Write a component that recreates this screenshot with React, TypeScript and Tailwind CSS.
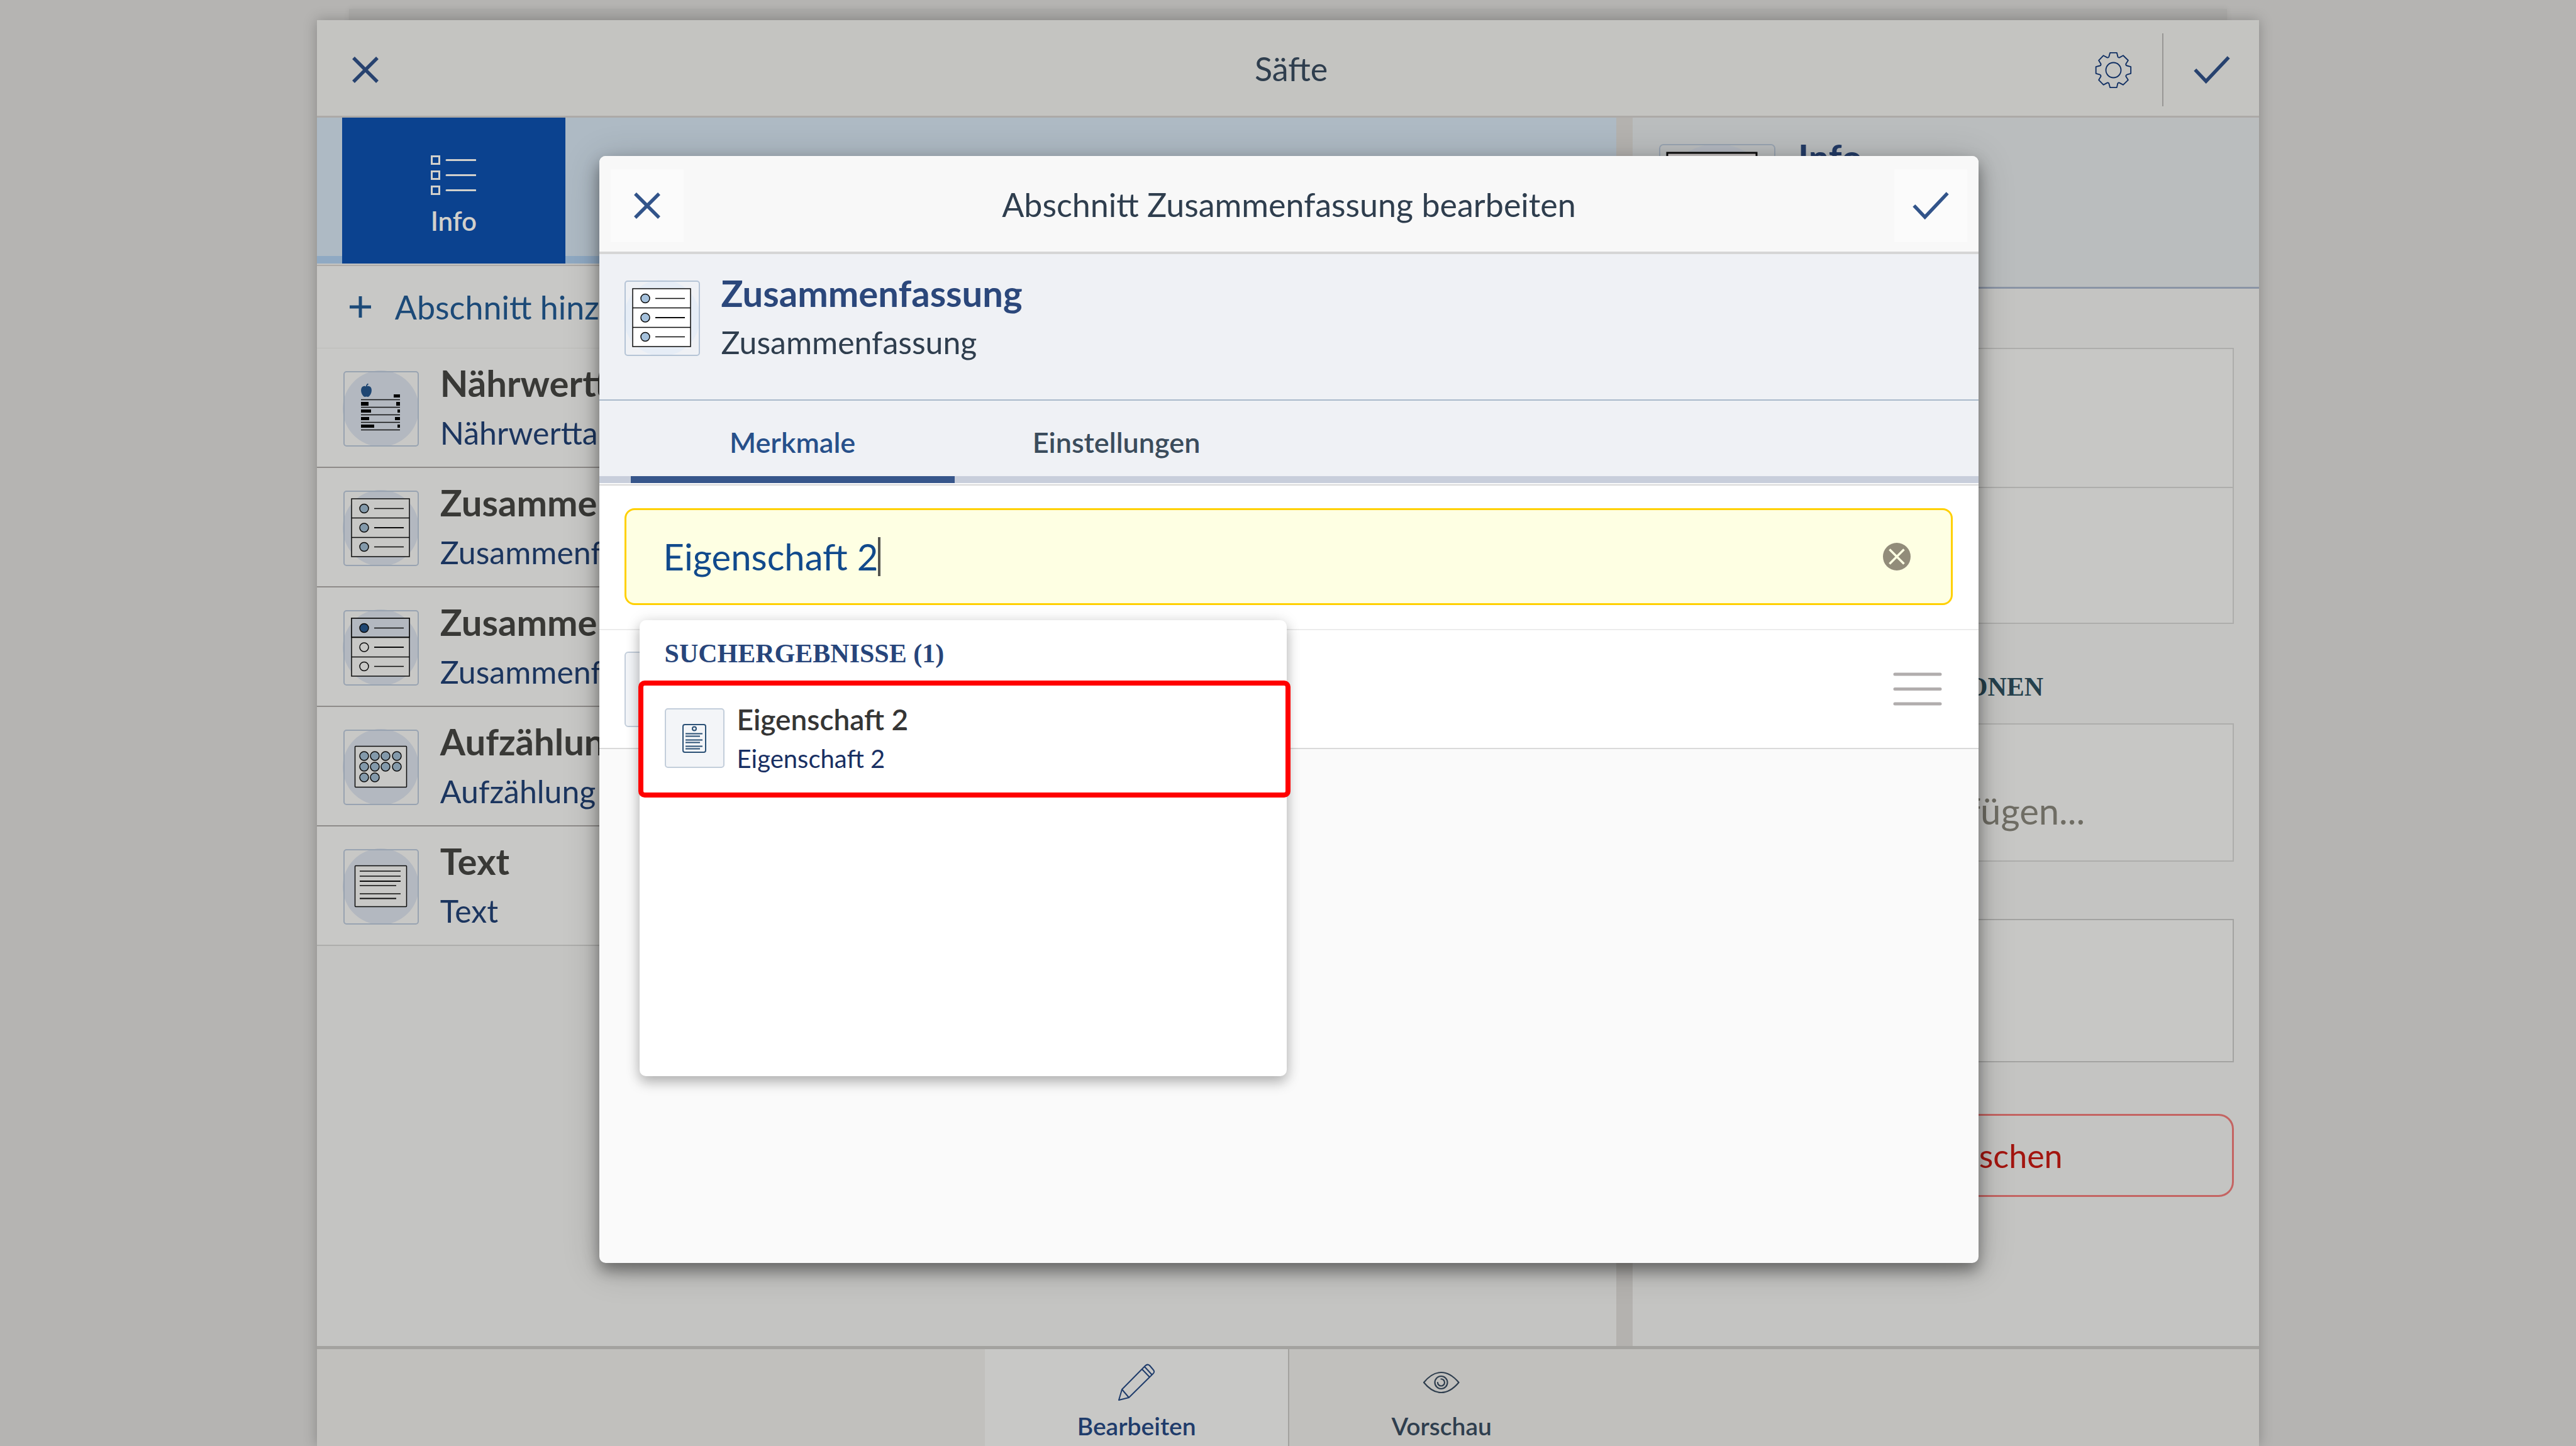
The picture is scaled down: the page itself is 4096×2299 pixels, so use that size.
import React from "react";

type IconKind = "nutrition" | "summary" | "summaryFirst" | "grid" | "text";

const ROWS = [0, 1, 2];
const DOTS = [
  [33, 42], [50, 42], [67, 42], [85, 42],
  [33, 59], [50, 59], [67, 59], [85, 59],
  [33, 76], [50, 76],
];

function SummaryDrawing({ paper, dot, firstOnly }: { paper: string; dot: string; firstOnly?: boolean }) {
  return (
    <g stroke="#0b0b0b" strokeWidth="1.5">
      <rect x="13" y="13" width="92" height="92" fill={paper} />
      {firstOnly && <rect x="13" y="13" width="92" height="30" fill="#b3b8c0" />}
      <path d="M13 43.5H105M13 74.5H105" />
      {ROWS.map((i) => (
        <g key={i}>
          <circle cx="33" cy={28.5 + i * 30.5} r="7" fill={firstOnly ? (i === 0 ? "#1f4672" : paper) : dot} />
          <path d={`M49 ${28.5 + i * 30.5}H96`} strokeWidth={i === 1 ? 2.2 : 1.5} />
        </g>
      ))}
    </g>
  );
}

function NutritionDrawing() {
  const bars = [
    [80, 37, 10, 5],
    [28, 49, 12, 6], [84, 49, 6, 6],
    [28, 61, 16, 5], [86, 61, 4, 5],
    [28, 73, 13, 5], [82, 73, 8, 5],
    [28, 85, 21, 5], [86, 85, 4, 5],
  ];
  return (
    <g>
      <path
        d="M36.500 25c-2-2-6-1.500-7.500 1.500-2 4-.5 10 3 13.500 1.500 1.500 3 1 4.500.5 1.500.5 3 1 4.500-.5 3.500-3.500 5-9.500 3-13.500-1.500-3-5.500-3.500-7.500-1.500z"
        fill="#1f4672"
      />
      <path d="M37 25c-.5-2 1-4 2.500-4.500" stroke="#1f4672" strokeWidth="2" fill="none" />
      {bars.map(([x, y, w, h]) => (
        <rect key={`${x}-${y}`} x={x} y={y} width={w} height={h} fill="#000" />
      ))}
      <path d="M28 45.500H90M28 57.500H90M28 69.500H90M28 81.500H90M28 93.500H90" stroke="#111" strokeWidth="1.500" />
    </g>
  );
}

function SectionIcon({ kind, light }: { kind: IconKind; light?: boolean }) {
  const paper = light ? "#ffffff" : "#c8c8c6";
  const dot = light ? "#a5c1dc" : "#8399aa";
  return (
    <svg viewBox="0 0 120 120" className="size-[120px] shrink-0 overflow-visible" fill="none" aria-hidden="true">
      <circle cx="59.5" cy="59.5" r="60.500" fill={light ? "#e6edf6" : "#b3b8c0"} />
      <rect x="1" y="1" width="118" height="118" rx="4" stroke={light ? "#b5c4d6" : "#98a3b1"} strokeWidth="2" />
      {kind === "summary" && <SummaryDrawing paper={paper} dot={dot} />}
      {kind === "summaryFirst" && <SummaryDrawing paper={paper} dot={dot} firstOnly />}
      {kind === "nutrition" && <NutritionDrawing />}
      {kind === "grid" && (
        <g stroke="#0b0b0b" strokeWidth="1.500">
          <rect x="18.500" y="26.500" width="82" height="65" rx="1" fill={paper} />
          {DOTS.map(([x, y]) => (
            <circle key={`${x}-${y}`} cx={x} cy={y} r="7" fill={dot} />
          ))}
        </g>
      )}
      {kind === "text" && (
        <g stroke="#0b0b0b" strokeWidth="1.500">
          <rect x="18.500" y="26.500" width="82" height="65" rx="1" fill={paper} />
          <path d="M26 35H91M26 43H91M26 58H84M26 71H91" />
          <path d="M26 51H91M26 78.500H84" strokeWidth="2.200" />
        </g>
      )}
    </svg>
  );
}

function CrossIcon() {
  return (
    <svg viewBox="0 0 42 42" className="size-[42px]" fill="none" stroke="currentColor" strokeWidth="5.500" aria-hidden="true">
      <path d="M2 2L40 40M40 2L2 40" />
    </svg>
  );
}

function CheckIcon() {
  return (
    <svg viewBox="950 120 315 240" className="h-11 w-[58px]" fill="none" stroke="currentColor" strokeWidth="30" aria-hidden="true">
      <path d="M962 239L1057 339L1253 132" />
    </svg>
  );
}

function GearIcon() {
  return (
    <svg viewBox="111 81 320 320" className="size-[59px]" fill="none" stroke="currentColor" strokeWidth="10" strokeLinejoin="round" aria-hidden="true">
      <path d="M242 91H300L309 126Q312 135 322 133L355 115L398 157L378 188Q377 200 388 203L421 212V270L388 280Q377 284 378 294L398 326L355 368L322 350Q312 347 308 356L300 391H242L232 356Q229 347 218 350L185 368L144 326L163 294Q164 284 154 280L120 270V212L154 203Q164 200 163 188L144 157L184 115L218 133Q229 135 232 126Z" />
      <circle cx="271" cy="241" r="65" />
    </svg>
  );
}

const SECTIONS: { title: string; subtitle: string; icon: IconKind }[] = [
  { title: "Nährwerttabelle", subtitle: "Nährwerttabelle", icon: "nutrition" },
  { title: "Zusammenfassung", subtitle: "Zusammenfassung", icon: "summary" },
  { title: "Zusammenfassung", subtitle: "Zusammenfassung", icon: "summaryFirst" },
  { title: "Aufzählung", subtitle: "Aufzählung", icon: "grid" },
  { title: "Text", subtitle: "Text", icon: "text" },
];

function LeftColumn() {
  return (
    <div className="flex w-[66.9%] flex-col">
      <div className="relative flex h-[232px] bg-[#aebac4] pl-10">
        <div className="absolute inset-x-0 bottom-0 h-3 bg-[#8fa9c3]" />
        <button className="relative flex w-[355px] flex-col items-center bg-[#0b428f] pt-[60px] text-[#d2d0cb]">
          <svg viewBox="0 0 72 63" className="h-[63px] w-[72px]" fill="none" stroke="currentColor" strokeWidth="3" aria-hidden="true">
            <path d="M1.500 1.500h12v12h-12zM1.500 25.500h12v12h-12zM1.500 49.500h12v12h-12z" />
            <path d="M25 7.500H71M25 31.500H71M25 55.500H71" strokeLinecap="round" />
          </svg>
          <span className="mt-4 text-[42px] leading-[50px] font-semibold">Info</span>
        </button>
      </div>
      <div className="mt-0.5 flex flex-col border-t-2 border-[#adaaa7] bg-[#c8c8c6]">
        <button className="flex h-[131px] items-center gap-[38px] border-b border-[#bdbdba] pl-[52px] text-[52px] text-[#1c4a78]">
          <svg viewBox="0 0 34 34" className="size-[34px]" stroke="currentColor" strokeWidth="5" aria-hidden="true">
            <path d="M17 0V34M0 17H34" />
          </svg>
          Abschnitt hinzufügen
        </button>
        <ul>
          {SECTIONS.map((s, i) => (
            <li key={i} className="flex h-[190px] gap-[34px] border-b-2 border-[#8e8b89] pl-[42px] last:border-[#adadab]">
              <div className="pt-9">
                <SectionIcon kind={s.icon} />
              </div>
              <div className="pt-4 whitespace-nowrap">
                <div className="text-[58px] leading-[78px] font-bold text-[#393936]">{s.title}</div>
                <div className="text-[50px] leading-[80px] text-[#1b355f]">{s.subtitle}</div>
              </div>
            </li>
          ))}
        </ul>
      </div>
    </div>
  );
}

function RightColumn() {
  return (
    <div className="flex min-w-0 flex-1 flex-col">
      <div className="flex h-[272px] gap-9 border-b-[3px] border-[#8a94a5] bg-[#babdbe] pt-[42px] pl-[42px]">
        <svg viewBox="0 0 185 185" className="size-[185px] overflow-visible" fill="none" aria-hidden="true">
          <circle cx="92" cy="92" r="92" fill="#b3b8c0" />
          <rect x="1" y="1" width="183" height="183" rx="6" stroke="#98a3b1" strokeWidth="2" />
          <rect x="13" y="14" width="142" height="142" fill="#c9c4c4" stroke="#0b0b0b" strokeWidth="3" />
        </svg>
        <div className="text-[58px] leading-[42px] font-bold text-[#233b66]">Info</div>
      </div>
      <div className="flex flex-col pt-[94px] pr-10 pl-[42px]">
        <div className="h-[221px] border-2 border-b-0 border-[#adadab] bg-[#c7c7c5]" />
        <div className="h-[218px] border-2 border-[#adadab] bg-[#c7c7c5]" />
        <h2 className="mt-[70px] pr-[303px] text-right font-['Liberation_Serif',serif] text-[42px] leading-[60px] font-bold whitespace-nowrap text-[#25404c]">
          INFORMATIONEN
        </h2>
        <input
          aria-label="Information hinzufügen"
          placeholder="Information hinzufügen..."
          className="mt-7 h-[220px] w-full border-2 border-[#adadab] bg-[#c7c7c5] pt-[60px] pr-[235px] pb-1 text-right text-[58px] placeholder:text-[#6f6d64]"
        />
        <div className="mt-[91px] h-[228px] border-2 border-[#a3a3a1] bg-[#c7c7c5]" />
        <button className="mt-[82px] h-[132px] rounded-3xl border-[3px] border-[#c46462] text-[52px] text-[#a3150f]">
          Produkt löschen
        </button>
      </div>
    </div>
  );
}

function BottomBar() {
  return (
    <nav className="flex h-[159px] border-t-[5px] border-[#a3a29f] bg-[#c1c0bd] pl-[34.4%] text-[39px] leading-[46px] font-semibold">
      <button className="flex w-[484px] flex-col items-center border-r-2 border-[#a3a29f] bg-[#c8c8c6] pt-[22px] text-[#1f3c6b]">
        <svg viewBox="26 7 60 61" className="h-[61px] w-[60px]" fill="none" stroke="currentColor" strokeWidth="2" strokeLinejoin="round" aria-hidden="true">
          <path d="M33 49L70 11.500Q73.500 8 77 11L82.500 17.500Q86 21 82 24.500L44 62ZM33 49L28 66L44 62M65 17L76.500 29M69 13L80.500 25.500" />
        </svg>
        <span className="mt-4">Bearbeiten</span>
      </button>
      <button className="flex w-[484px] flex-col items-center pt-[22px] text-[#2f3e4e]">
        <svg viewBox="511 7 60 61" className="h-[61px] w-[60px]" fill="none" stroke="currentColor" strokeWidth="2.200" strokeLinejoin="round" aria-hidden="true">
          <path d="M513 38Q526 22 540.500 22Q555 22 568.500 38Q555 54 540.500 54Q526 54 513 38Z" />
          <circle cx="540.500" cy="38" r="10" />
          <path d="M540.500 32.500A5.500 5.500 0 1 1 535 38" strokeLinecap="round" />
        </svg>
        <span className="mt-4">Vorschau</span>
      </button>
    </nav>
  );
}

function SearchResults() {
  return (
    <div className="absolute top-[178px] left-6 flex h-[725px] w-[48.7%] flex-col rounded-[10px] bg-white shadow-[0_10px_20px_rgba(0,0,0,0.25),0_0_24px_rgba(0,0,0,0.1)]">
      <h3 className="h-[96px] pt-2 pl-10 font-['Liberation_Serif',serif] text-[42px] leading-[90px] font-bold text-[#27457b]">
        SUCHERGEBNISSE (1)
      </h3>
      <button className="relative flex h-[186px] gap-[20px] pl-10 text-left">
        <span className="absolute inset-y-0 -right-1.5 -left-0.5 rounded-[10px] border-8 border-[#ff0000]" />
        <svg viewBox="0 0 95 95" className="mt-11 size-[95px]" fill="none" stroke="#2a5075" strokeWidth="2" aria-hidden="true">
          <rect x="1" y="1" width="93" height="93" rx="4" fill="#f3f5f8" stroke="#c3cedb" />
          <rect x="29" y="26" width="36" height="44" rx="3" />
          <circle cx="47" cy="32.500" r="3" />
          <path d="M33 40.500H60M33 44.500H56M33 50.500H60M33 54.500H56M33 60.500H60M33 64.500H56" />
        </svg>
        <span className="block pt-8">
          <span className="block text-[46px] leading-[60px] font-semibold text-[#353535]">Eigenschaft 2</span>
          <span className="block text-[40px] leading-[64px] text-[#182f63]">Eigenschaft 2</span>
        </span>
      </button>
    </div>
  );
}

function Dialog() {
  return (
    <div
      role="dialog"
      aria-label="Abschnitt Zusammenfassung bearbeiten"
      className="flex h-full w-[53.6%] flex-col overflow-hidden rounded-[10px] bg-[#fafafa] shadow-[0_12px_24px_rgba(0,0,0,0.4),0_8px_60px_rgba(0,0,0,0.2)]"
    >
      <header className="flex h-[156px] items-center justify-between border-b-4 border-[#d6d6d6] bg-[#f8f8f8] px-[18px] pt-1.5">
        <button aria-label="Schließen" className="grid size-[116px] place-items-center bg-[#fbfbfb] text-[#32548a]">
          <CrossIcon />
        </button>
        <h1 className="pb-1 text-[52px] text-[#2f3e4e]">Abschnitt Zusammenfassung bearbeiten</h1>
        <button aria-label="Speichern" className="grid size-[116px] place-items-center bg-[#fbfbfb] text-[#32548a]">
          <CheckIcon />
        </button>
      </header>
      <div className="flex h-[233px] gap-[34px] border-b-2 border-[#a9b9ca] bg-[#eff1f5] pl-10">
        <div className="pt-[42px]">
          <SectionIcon kind="summary" light />
        </div>
        <div className="pt-6">
          <div className="text-[58px] leading-[76px] font-bold text-[#2b477b]">Zusammenfassung</div>
          <div className="text-[50px] leading-[80px] text-[#2f3e4e]">Zusammenfassung</div>
        </div>
      </div>
      <div role="tablist" className="relative flex h-[131px] bg-[#eff1f5] pl-[50px] text-[45px] font-semibold">
        <div className="absolute inset-x-0 bottom-0 h-[11px] bg-[#c8cedb]" />
        <button role="tab" aria-selected="true" className="relative w-[515px] border-b-[11px] border-[#37568b] pt-3.5 text-[#27508a]">
          Merkmale
        </button>
        <button role="tab" aria-selected="false" className="relative w-[515px] border-b-[11px] border-transparent pt-3.5 text-[#3b4c5c]">
          Einstellungen
        </button>
      </div>
      <div className="mt-0.5 border-t-2 border-[#d9d9d9] bg-white pt-9 pr-[41px] pb-[38px] pl-10">
        <div className="relative">
          <div className="flex h-[154px] items-center rounded-[16px] border-[3px] border-[#ffd000] bg-[#feffe3] pr-[64px] pl-[59px]">
            <input
              aria-label="Merkmal suchen"
              defaultValue="Eigenschaft 2"
              className="[field-sizing:content] bg-transparent text-[58px] leading-[76px] text-[#114a8c] outline-none"
            />
            <span className="h-[62px] w-1 bg-[#555550]" />
            <button aria-label="Leeren" className="ml-auto">
              <svg viewBox="0 0 44 44" className="size-11" aria-hidden="true">
                <circle cx="22" cy="22" r="22" fill="#928c7a" />
                <path d="M10.500 10.500L33.500 33.500M33.500 10.500L10.500 33.500" stroke="#feffe3" strokeWidth="3.500" />
              </svg>
            </button>
          </div>
          <SearchResults />
        </div>
      </div>
      <div className="flex h-[191px] items-center justify-between border-y-2 border-t-[#ececec] border-b-[#dadada] bg-white pr-[58px] pl-10">
        <div className="size-[120px] rounded-md border-2 border-[#c3cedb] bg-[#f3f5f8]" />
        <svg viewBox="0 0 78 53" className="h-[53px] w-[78px]" stroke="#b1adad" strokeWidth="5" strokeLinecap="round" aria-hidden="true">
          <path d="M3 3H75M3 26.500H75M3 50H75" />
        </svg>
      </div>
    </div>
  );
}

export default function App() {
  return (
    <div className="relative flex h-screen flex-col items-center overflow-hidden bg-[#b5b4b2] pt-8 font-[Lato,sans-serif]">
      <div className="absolute top-3.5 h-10 w-[72.9%] bg-[#abaaa8] shadow-[0_0_10px_rgba(0,0,0,0.06)]" />
      <div className="relative flex w-[75.4%] flex-1 flex-col bg-[#c4c4c2] shadow-[0_0_20px_rgba(0,0,0,0.25)]">
        <header className="grid h-[155px] grid-cols-3 items-center border-b-[3px] border-[#adaaa7] bg-[#c4c4c1] pt-1.5 pr-[46px] pl-[56px] text-[#27426f]">
          <button aria-label="Schließen" className="justify-self-start">
            <CrossIcon />
          </button>
          <h1 className="pb-1 text-center text-[52px] text-[#2f3e4e]">Säfte</h1>
          <div className="flex items-center justify-self-end">
            <button aria-label="Einstellungen" className="text-[#102f63]">
              <GearIcon />
            </button>
            <span className="mx-12 h-[116px] w-0.5 bg-[#989795]" />
            <button aria-label="Speichern">
              <CheckIcon />
            </button>
          </div>
        </header>
        <main className="flex flex-1">
          <LeftColumn />
          <div className="w-[26px] bg-[#b4b2af]" />
          <RightColumn />
        </main>
        <BottomBar />
      </div>
      <div className="absolute inset-0 flex justify-center pt-[248px] pb-[291px] pl-[3px]">
        <Dialog />
      </div>
    </div>
  );
}
